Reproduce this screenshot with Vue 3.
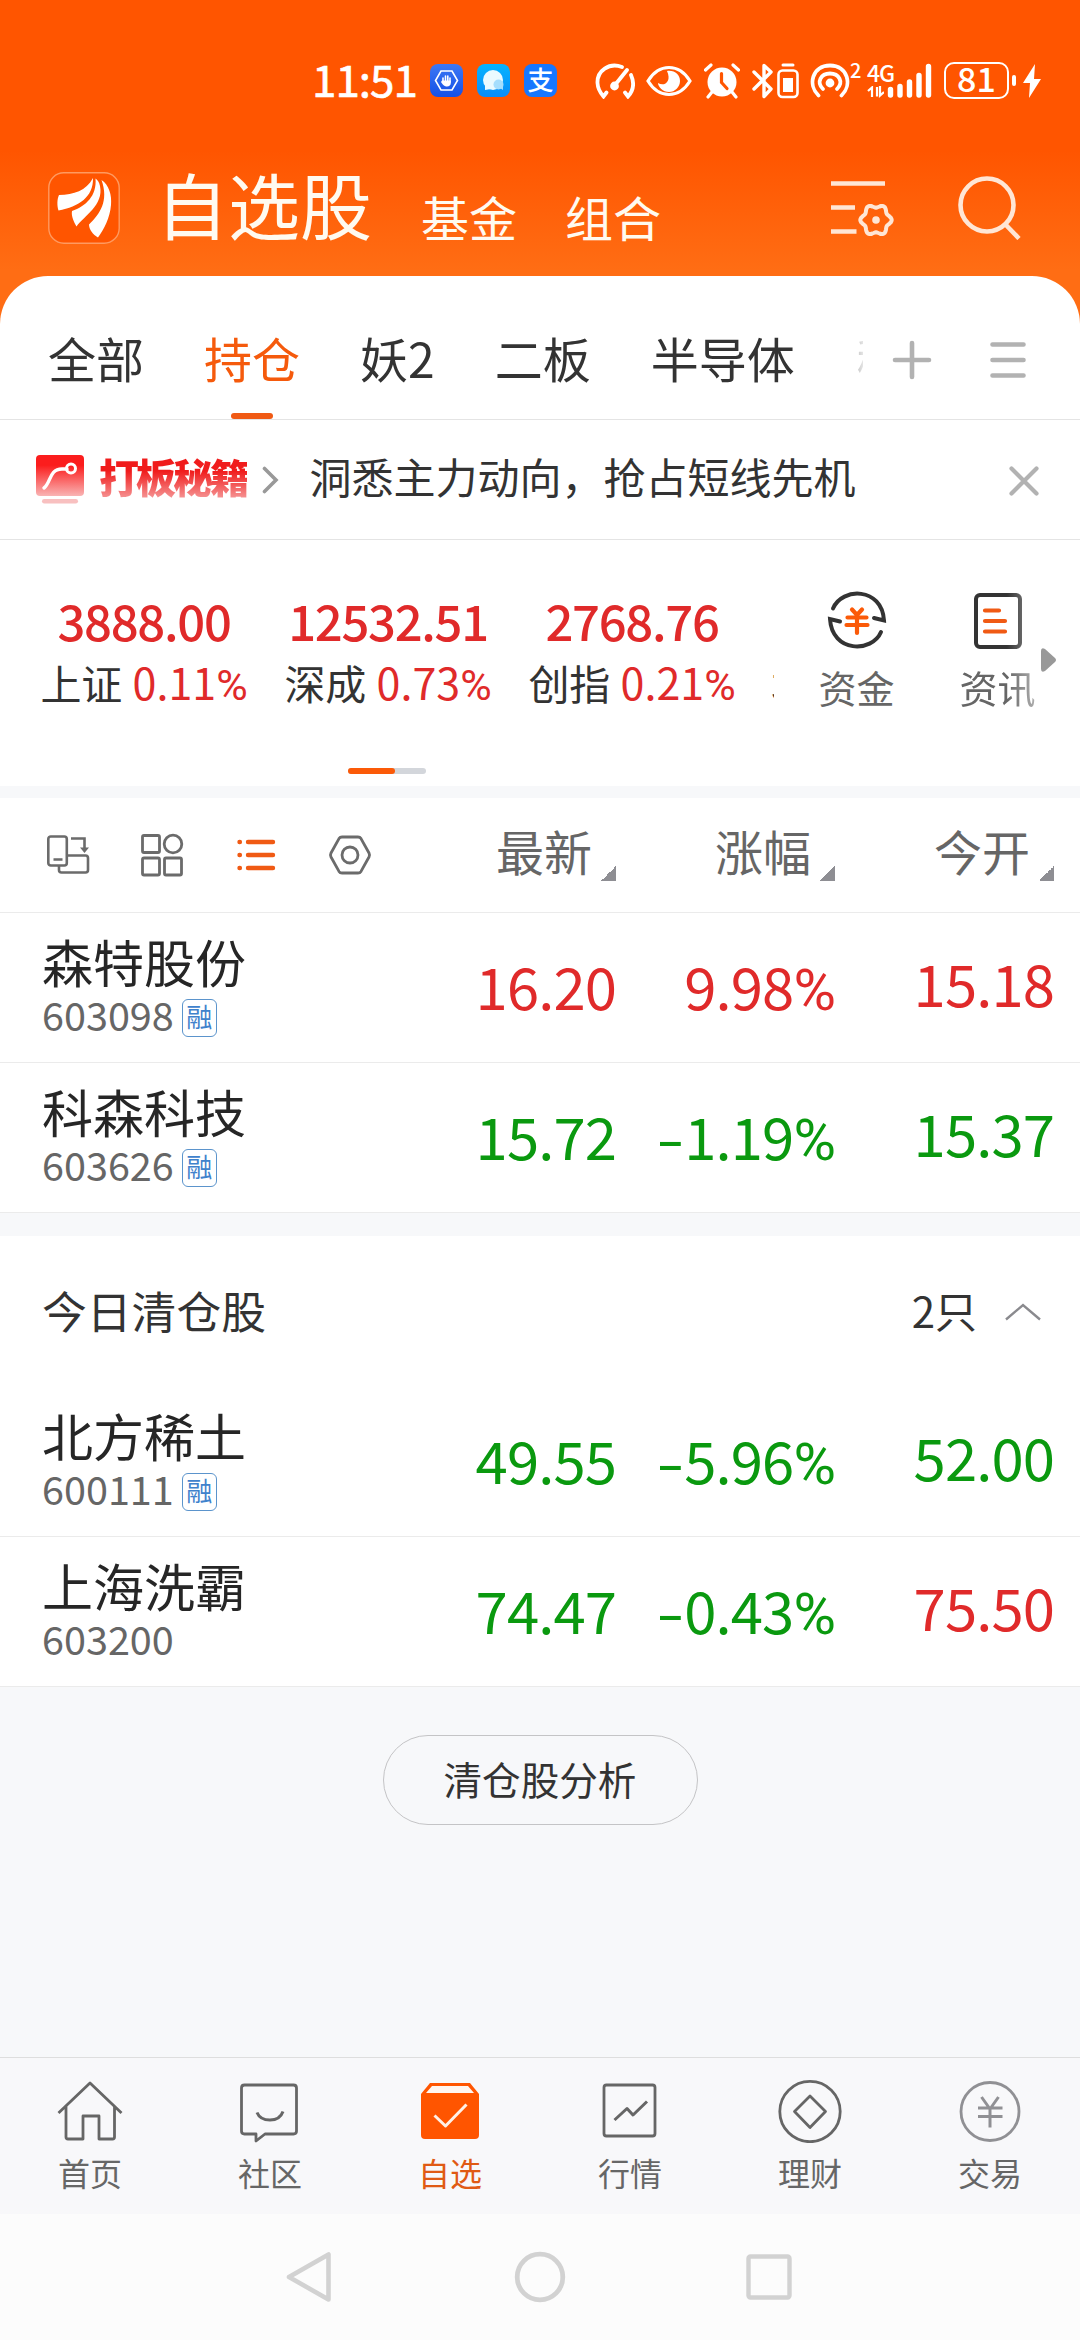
<template>
  <div class="page">
    <div class="status-bar">
      <span class="time">11:51</span>
      <div class="notices">
        <span class="notice hand">
          <svg width="33" height="33" viewBox="0 0 33 33" fill="none">
            <path d="M11 7h11l5.500 9.500L22 26H11l-5.500-9.500z" stroke="#fff" stroke-width="1.600" />
            <path d="M13 18v-4M15.500 17v-5M17.800 17v-5M20 18v-4" stroke="#fff" stroke-width="1.600" stroke-linecap="round" />
            <path d="M12 16.500h8.800v2.500c0 2-1.500 3.500-3.800 3.500-2.500 0-3.500-1-6-4.500z" fill="#fff" />
          </svg>
        </span>
        <span class="notice chat">
          <svg width="33" height="33" viewBox="0 0 33 33">
            <circle cx="16" cy="16" r="10" fill="#eafaff" />
            <path d="M8 20v6l6-1z" fill="#eafaff" />
            <circle cx="21.500" cy="20.500" r="5" fill="#a5defd" />
            <path d="M23 24l3 2v-5z" fill="#a5defd" />
          </svg>
        </span>
        <span class="notice pay">支</span>
      </div>
      <div class="sys-icons">
        <svg class="i-gauge" width="40" height="36" viewBox="0 0 40 36" fill="none" stroke="#fff" stroke-width="3.800" stroke-linecap="round">
          <path d="M27 4C14-1 2 8 2.500 20c.2 5 2.500 9.500 6 13.500l3-4M36 12c3.500 8 2.500 15.500-3 21.500l-3-4M32 7L20 22" />
          <circle cx="19.500" cy="23" r="2.500" fill="#fff" />
        </svg>
        <svg class="i-eye" width="46" height="32" viewBox="0 0 46 32" fill="none">
          <path d="M2 16C13-2 33-2 44 16 33 34 13 34 2 16z" stroke="#fff" stroke-width="3.200" />
          <path d="M21 6c8-1 13 4 13 10s-5 11-11 11-11-5-11-9c6 4 14-1 9-12z" fill="#fff" />
        </svg>
        <svg class="i-alarm" width="36" height="36" viewBox="0 0 36 36" fill="none" stroke-linecap="round">
          <circle cx="18" cy="19" r="14.500" fill="#fff" />
          <path d="M1.500 7L7 2M34.500 7L29 2M8 29l-4 5M28 29l4 5" stroke="#fff" stroke-width="3.200" />
          <path d="M17.500 10.500v9l5.500 6" stroke="#ff5500" stroke-width="3.200" />
        </svg>
        <svg class="i-bt" width="21" height="36" viewBox="0 0 21 36" fill="none" stroke="#fff" stroke-width="3.400" stroke-linejoin="round" stroke-linecap="round">
          <path d="M2 9l17 17-7 7.500V2.500l7 6.500L2 26" />
        </svg>
        <svg class="i-cell" width="22" height="36" viewBox="0 0 22 36" fill="none" stroke="#fff">
          <rect x="1.500" y="7.500" width="19" height="26.500" rx="4" stroke-width="2.600" />
          <path d="M6 2h10" stroke-width="3" stroke-linecap="round" />
          <rect x="6" y="15" width="10" height="14" fill="#fff" stroke="none" />
        </svg>
        <svg class="i-hotspot" width="40" height="36" viewBox="0 0 40 36" fill="none" stroke="#fff" stroke-width="3.800" stroke-linecap="round">
          <path d="M8.500 32.500C-2.500 22 2 2.500 20 2.500s22.500 19.500 11.500 30" />
          <path d="M13 26c-7-7-2-15.500 7-15.500S34 19 27 26" />
          <circle cx="20" cy="20" r="2.500" fill="#fff" />
        </svg>
        <span class="hotspot-count">2</span>
        <div class="net">
          <span class="net-type">4G</span>
          <svg width="17" height="12" viewBox="0 0 17 12" fill="none" stroke="#fff" stroke-width="2.200">
            <path d="M1 5l4-3.500V11M10 1v9.500M13 0v9.500l4-3.500" />
          </svg>
        </div>
        <svg class="i-signal" width="45" height="36" viewBox="0 0 45 36" stroke="#fff" stroke-width="5.400" stroke-linecap="round">
          <path d="M3.500 26.500V32M13 23.500V32M22.500 19V32M32 12.500V32M41.500 3.500V32" />
        </svg>
        <span class="battery">81</span>
        <span class="battery-nub"></span>
        <svg class="i-bolt" width="18" height="36" viewBox="0 0 18 36" fill="#fff">
          <path d="M12 1L0 20h7L6 35l12-19h-7z" />
        </svg>
      </div>
    </div>

    <div class="app-bar">
      <svg class="logo" width="72" height="72" viewBox="0 0 72 72">
        <rect x=".8" y=".8" width="70.400" height="70.400" rx="15" fill="#ff5500" stroke="#ff9a60" stroke-width="1.400" />
        <g fill="#fff">
          <path d="M45 6C38 19 26 22.500 11 23c-2 4-2 11-.5 15.500C31 34.500 45.500 25 45 6z" />
          <path d="M47.500 6.500C49 24 38 34 24 39c-1 5 2 11 4.500 15.500C36 44 56 33 52 14c-.8-4-2.500-6-4.500-7.500z" />
          <path d="M53.500 8C61 13 64 23 63 33c-1 13-7 24-13 32.500-5-3-9-8-9-13C52 42 61 29 53.500 8z" />
        </g>
      </svg>
      <span class="title">自选股</span>
      <span class="sub-title">基金</span>
      <span class="sub-title">组合</span>
      <div class="app-actions">
        <svg width="64" height="64" viewBox="0 0 64 64" fill="none" stroke="#ffe6d5" stroke-width="4.600">
          <path d="M1 7.500h54M1 31.500h24M1 55.500h25.500" />
          <path :d="gearPath" stroke-width="4" stroke-linejoin="round" />
          <circle cx="46" cy="44" r="3.800" fill="#ffe6d5" stroke="none" />
        </svg>
        <svg width="64" height="64" viewBox="0 0 64 64" fill="none" stroke="#ffe6d5" stroke-width="4.600">
          <circle cx="29" cy="29" r="26.500" />
          <path d="M47 48l14 14.500" />
        </svg>
      </div>
    </div>

    <div class="sheet">
      <div class="group-tabs">
        <div class="tab-scroll">
          <span v-for="tab in groupTabs" :key="tab" class="group-tab" :class="{ active: tab === '持仓' }">{{ tab }}</span>
        </div>
        <svg class="i-plus" width="40" height="40" viewBox="0 0 40 40" stroke="#b2b2b2" stroke-width="4.600" stroke-linecap="round">
          <path d="M3 20h34M20 3v34" />
        </svg>
        <svg class="i-menu" width="36" height="40" viewBox="0 0 36 40" stroke="#b2b2b2" stroke-width="4.600" stroke-linecap="round">
          <path d="M2.500 4.500h31M2.500 20h31M2.500 35.500h31" />
        </svg>
      </div>

      <div class="banner">
        <svg class="banner-icon" width="48" height="50" viewBox="0 0 48 50" fill="none">
          <defs>
            <linearGradient id="bannerFill" x1="0" y1="0" x2="0" y2="1">
              <stop offset="0.250" stop-color="#fb1d1d" />
              <stop offset="1" stop-color="#f9b4b4" />
            </linearGradient>
          </defs>
          <rect width="48" height="41" rx="4" fill="url(#bannerFill)" />
          <rect x="6" y="44" width="36" height="4.500" rx="2.200" fill="#f8c0c0" />
          <path d="M8 33c7-5 5-19 18-19h5" stroke="#fff" stroke-width="3.400" stroke-linecap="round" />
          <circle cx="35" cy="13.500" r="4.500" stroke="#fff" stroke-width="3" />
        </svg>
        <span class="banner-tag">打板秘籍</span>
        <svg class="banner-arrow" width="17" height="28" viewBox="0 0 17 28" fill="none" stroke="#999" stroke-width="3.600" stroke-linecap="round">
          <path d="M2.500 2.500L14 14 2.500 25.500" />
        </svg>
        <span class="banner-text">洞悉主力动向，抢占短线先机</span>
        <svg class="banner-close" width="30" height="30" viewBox="0 0 30 30" stroke="#b2b2b2" stroke-width="4.200" stroke-linecap="round">
          <path d="M2.500 2.500l25 25M27.500 2.500l-25 25" />
        </svg>
      </div>

      <div class="indexes">
        <div class="index-main">
          <div class="index-list">
            <div v-for="item in indexes" :key="item.name" class="index-item">
              <div class="index-value">{{ item.value }}</div>
              <div class="index-label">
                {{ item.name }}
                <span v-if="item.rate" class="index-rate">{{ item.rate }}<i class="pct">%</i></span>
              </div>
            </div>
          </div>
          <div class="shortcuts">
            <div class="shortcut">
              <svg width="60" height="60" viewBox="0 0 60 60" fill="none" stroke="#333" stroke-width="4" stroke-linecap="round">
                <path d="M6 18.500C15-3 55-3 57 30.500l-10-2.500M54 42C45 63 5 63 3 29l10 2.500" />
                <path d="M25 19.500l5 5.500 5-5.500M20.500 27.500h19M19.500 35h21M30 27v16" stroke="#fb5a08" stroke-width="4.200" />
              </svg>
              <span>资金</span>
            </div>
            <div class="shortcut fade">
              <svg width="60" height="60" viewBox="0 0 60 60" fill="none" stroke="#333" stroke-width="4">
                <rect x="8" y="5" width="44" height="52" rx="4" />
                <path d="M17 20.500h14M17 31h20M17 41.500h20" stroke="#f05a14" stroke-width="4.200" stroke-linecap="round" />
              </svg>
              <span>资讯</span>
            </div>
          </div>
          <svg class="more" width="15" height="24" viewBox="0 0 15 24" fill="#999">
            <path d="M0 3q0-4 4-2l10 9q2 2 0 4L4 23q-4 2-4-2z" />
          </svg>
        </div>
        <div class="pager"><span></span></div>
      </div>

      <div class="gap-small"></div>

      <div class="grid-row list-head">
        <div class="view-modes">
          <svg width="44" height="44" viewBox="0 0 44 44" fill="none" stroke="#6b6b6b" stroke-width="2.600">
            <rect x="2.300" y="3.500" width="18.500" height="29" rx="2.500" />
            <path d="M7.500 26.500h9M13 33v4q0 2.500 2.500 2.500h24q2.500 0 2.500-2.500V25q0-2.500-2.500-2.500H21M25 5.500h13.500V16" />
            <path d="M34 14.500h9L38.500 20z" fill="#6b6b6b" stroke="none" />
          </svg>
          <svg width="44" height="44" viewBox="0 0 44 44" fill="none" stroke="#6b6b6b" stroke-width="2.800">
            <rect x="2.500" y="2.500" width="17" height="17" rx="1.500" />
            <circle cx="33" cy="11" r="8.800" />
            <rect x="2.500" y="25" width="17" height="17" rx="1.500" />
            <rect x="24.500" y="25" width="17" height="17" rx="1.500" />
          </svg>
          <svg width="44" height="44" viewBox="0 0 44 44" fill="none" stroke="#f05a14" stroke-width="4.400" stroke-linecap="round">
            <path d="M14 9h25M14 22h25M14 35h25M5.500 9h.4M5.500 22h.4M5.500 35h.4" />
          </svg>
          <svg width="44" height="44" viewBox="0 0 44 44" fill="none" stroke="#6b6b6b" stroke-width="2.800" stroke-linejoin="round">
            <path d="M14 4h16q2 0 3 1.600L41 20q1 2 0 4L33 38.400Q32 40 30 40H14q-2 0-3-1.600L3 24q-1-2 0-4L11 5.600Q12 4 14 4z" />
            <circle cx="22" cy="22" r="8" />
          </svg>
        </div>
        <div v-for="col in columns" :key="col" class="col-head">
          <span>{{ col }}</span>
          <i class="sort"></i>
        </div>
      </div>

      <div v-for="stock in holdings" :key="stock.code" class="grid-row stock">
        <div class="stock-info">
          <div class="stock-name">{{ stock.name }}</div>
          <div class="stock-code">{{ stock.code }}<span v-if="stock.margin" class="badge">融</span></div>
        </div>
        <div class="num" :class="stock.trend">{{ stock.price }}</div>
        <div class="num" :class="stock.trend"><i v-if="stock.trend === 'down'" class="minus">-</i>{{ stock.rate }}<i class="pct">%</i></div>
        <div class="num open" :class="stock.openTrend">{{ stock.open }}</div>
      </div>

      <div class="gap-large"></div>

      <div class="cleared-head">
        <span class="cleared-title">今日清仓股</span>
        <span class="cleared-count">2只</span>
        <svg width="36" height="18" viewBox="0 0 36 18" fill="none" stroke="#8a8a8e" stroke-width="2.400">
          <path d="M1 16.500L18 2l17 14.500" />
        </svg>
      </div>

      <div v-for="stock in cleared" :key="stock.code" class="grid-row stock">
        <div class="stock-info">
          <div class="stock-name">{{ stock.name }}</div>
          <div class="stock-code">{{ stock.code }}<span v-if="stock.margin" class="badge">融</span></div>
        </div>
        <div class="num" :class="stock.trend">{{ stock.price }}</div>
        <div class="num" :class="stock.trend"><i v-if="stock.trend === 'down'" class="minus">-</i>{{ stock.rate }}<i class="pct">%</i></div>
        <div class="num open" :class="stock.openTrend">{{ stock.open }}</div>
      </div>

      <div class="empty-area">
        <button class="analyse">清仓股分析</button>
      </div>
    </div>

    <div class="tab-bar">
      <div v-for="item in navItems" :key="item.key" class="nav-item" :class="{ active: item.key === 'watch' }">
        <svg width="66" height="64" viewBox="0 0 66 64" fill="none" stroke="#666" stroke-width="2.800" stroke-linejoin="round">
          <template v-if="item.key === 'home'">
            <path d="M1.500 34L33 4l31.500 30M9 27v31q0 2 2 2h15V37h16v23h13.500q2 0 2-2V27" />
          </template>
          <template v-else-if="item.key === 'community'">
            <path d="M7.500 6h49q3 0 3 3v43q0 3-3 3H28l-9 7v-7H7.500q-3 0-3-3V9q0-3 3-3z" />
            <path d="M20 33.500q3 7.500 13 7.500t13-8.500" stroke-width="3" />
          </template>
          <template v-else-if="item.key === 'watch'">
            <path d="M4 15L13 4h40l9 11v41q0 4-4 4H8q-4 0-4-4z" fill="#ff5500" stroke="none" />
            <path d="M9 14l6-7h36l6 7z" fill="#fff6f0" stroke="none" />
            <path d="M17.500 36.500l11 10.500 21-21.500" stroke="#fff0e6" stroke-width="3" />
          </template>
          <template v-else-if="item.key === 'market'">
            <rect x="7" y="6" width="51" height="51" rx="2.500" />
            <path d="M17.500 41L30 29.500l6 6.500 14-13.500" stroke-width="3" />
          </template>
          <template v-else-if="item.key === 'wealth'">
            <circle cx="33" cy="32.500" r="30.200" />
            <path d="M33 17l15.500 15.500L33 48.500l-15.500-16z" />
          </template>
          <template v-else>
            <g stroke="#909094">
              <circle cx="33" cy="32.500" r="29" />
              <path d="M24.500 18L33 30l8.500-12M21 29h24.500M21 37.500h24.500M33 29v19.500" stroke-width="3" />
            </g>
          </template>
        </svg>
        <span>{{ item.label }}</span>
      </div>
    </div>

    <div class="sys-nav">
      <svg width="52" height="52" viewBox="0 0 52 52" fill="none" stroke="#d2d2d2" stroke-width="4.600" stroke-linejoin="round">
        <path d="M43.500 3.500v45L4 26z" />
      </svg>
      <svg width="52" height="52" viewBox="0 0 52 52" fill="none" stroke="#d2d2d2" stroke-width="4.800">
        <circle cx="26" cy="26" r="22.800" />
      </svg>
      <svg width="52" height="52" viewBox="0 0 52 52" fill="none" stroke="#d2d2d2" stroke-width="4.400">
        <rect x="5.500" y="5.500" width="41" height="41" rx="2" />
      </svg>
    </div>
  </div>
</template>

<script setup>
const groupTabs = ['全部', '持仓', '妖2', '二板', '半导体', '稀土']

const indexes = [
  { name: '上证', value: '3888.00', rate: '0.11' },
  { name: '深成', value: '12532.51', rate: '0.73' },
  { name: '创指', value: '2768.76', rate: '0.21' },
  { name: '北证', value: '', rate: '' }
]

const columns = ['最新', '涨幅', '今开']

const holdings = [
  { name: '森特股份', code: '603098', margin: true, price: '16.20', rate: '9.98', open: '15.18', trend: 'up', openTrend: 'up' },
  { name: '科森科技', code: '603626', margin: true, price: '15.72', rate: '1.19', open: '15.37', trend: 'down', openTrend: 'down' }
]

const cleared = [
  { name: '北方稀土', code: '600111', margin: true, price: '49.55', rate: '5.96', open: '52.00', trend: 'down', openTrend: 'down' },
  { name: '上海洗霸', code: '603200', margin: false, price: '74.47', rate: '0.43', open: '75.50', trend: 'down', openTrend: 'up' }
]

const navItems = [
  { key: 'home', label: '首页' },
  { key: 'community', label: '社区' },
  { key: 'watch', label: '自选' },
  { key: 'market', label: '行情' },
  { key: 'wealth', label: '理财' },
  { key: 'trade', label: '交易' }
]

// six-lobed gear outline around (46, 44)
const gearPoints = []
for (let i = 0; i < 72; i++) {
  const a = (i * 5 * Math.PI) / 180
  const r = 14 + 1.7 * Math.cos(6 * a)
  gearPoints.push(`${(46 + r * Math.cos(a)).toFixed(1)} ${(44 + r * Math.sin(a)).toFixed(1)}`)
}
const gearPath = `M${gearPoints.join('L')}z`
</script>

<style>
body {
  margin: 0;
  background: #f7f8fa;
}
</style>

<style scoped>
.page {
  width: 1080px;
  height: 2340px;
  display: flex;
  flex-direction: column;
  overflow: hidden;
  background: linear-gradient(#ff5500 150px, #ff6d14 270px, #ff6d14 330px, #fff 330px);
  font-family: "Noto Sans CJK SC", sans-serif;
  color: #333;
}

svg {
  display: block;
  flex: none;
}

.status-bar {
  height: 161px;
  flex: none;
  display: flex;
  align-items: center;
  padding-left: 312px;
  color: #fff;
}

.time {
  width: 118px;
  font-size: 44px;
  line-height: 50px;
  letter-spacing: -1px;
  margin-bottom: 6px;
  -webkit-text-stroke: 0.6px #fff;
}

.notices {
  display: flex;
  gap: 14px;
  width: 165px;
}

.notice {
  width: 33px;
  height: 33px;
  border-radius: 8px;
}

.hand {
  background: linear-gradient(#3d78f5, #1450e6);
}

.chat {
  background: linear-gradient(#04b4ff, #0a8cf8);
}

.pay {
  background: #1677ff;
  font-size: 26px;
  line-height: 30px;
  font-weight: 500;
  text-align: center;
}

.sys-icons {
  display: flex;
  align-items: center;
}

.i-eye {
  margin-left: 11px;
}

.i-alarm {
  margin-left: 12px;
}

.i-bt {
  margin-left: 12px;
}

.i-cell {
  margin-left: 4px;
}

.i-hotspot {
  margin-left: 11px;
}

.hotspot-count {
  width: 17px;
  font-size: 20px;
  line-height: 20px;
  margin-bottom: 22px;
  font-weight: 500;
}

.net {
  width: 20px;
  height: 36px;
  white-space: nowrap;
}

.net-type {
  display: block;
  height: 23px;
  font-size: 23px;
  line-height: 18px;
  font-weight: 500;
  letter-spacing: -1px;
}

.i-signal {
  margin-right: 12px;
}

.battery {
  width: 61px;
  height: 33px;
  border: 2.5px solid #fff;
  border-radius: 10px;
  text-align: center;
  font-size: 34px;
  line-height: 28px;
  font-weight: 500;
}

.battery-nub {
  width: 4px;
  height: 11px;
  margin: 0 7px 0 3px;
  border-radius: 2px;
  background: #fff;
}

.app-bar {
  height: 94px;
  flex: none;
  margin-bottom: 21px;
  padding: 0 58px 0 48px;
  display: flex;
  align-items: center;
  color: #fffaf0;
}

.title {
  margin: 0 49px 10px 36px;
  font-size: 72px;
  line-height: 80px;
}

.sub-title {
  margin: 15px 48px 0 0;
  font-size: 48px;
  line-height: 60px;
}

.app-actions {
  display: flex;
  gap: 64px;
  margin-left: auto;
}

.sheet {
  flex: 1;
  display: flex;
  flex-direction: column;
  background: #fff;
  border-radius: 48px 48px 0 0;
}

.group-tabs {
  box-sizing: border-box;
  height: 144px;
  flex: none;
  display: flex;
  align-items: center;
  padding: 18px 54px 0 48px;
  border-bottom: 1px solid #e4e4e4;
}

.tab-scroll {
  width: 815px;
  height: 125px;
  display: flex;
  align-items: center;
  gap: 60px;
  overflow: hidden;
  white-space: nowrap;
  mask-image: linear-gradient(90deg, #000 780px, transparent 820px);
}

.group-tab {
  flex: none;
  font-size: 48px;
  line-height: 60px;
}

.group-tab:last-child {
  padding-left: 2px;
}

.group-tab.active {
  position: relative;
  color: #f55a0c;
}

.group-tab.active::after {
  content: "";
  position: absolute;
  left: 27px;
  bottom: -32px;
  width: 42px;
  height: 6px;
  border-radius: 3px;
  background: #f05a14;
}

.i-plus {
  margin: 6px 0 0 29px;
}

.i-menu {
  margin: 6px 0 0 auto;
}

.banner {
  box-sizing: border-box;
  height: 120px;
  flex: none;
  display: flex;
  align-items: center;
  padding: 0 41px 8px 36px;
  border-bottom: 1px solid #e4e4e4;
}

.banner-icon {
  margin-top: 9px;
}

.banner-tag {
  margin: 0 15px 0 15px;
  font-size: 40px;
  line-height: 50px;
  font-weight: 900;
  letter-spacing: -2.9px;
  color: transparent;
  background: linear-gradient(#f01c1c 40%, #f6a0a0 100%);
  background-clip: text;
  -webkit-background-clip: text;
}

.banner-arrow {
  margin-top: 9px;
}

.banner-text {
  margin-left: 30px;
  font-size: 42px;
  line-height: 50px;
}

.banner-close {
  margin: 10px 0 0 auto;
}

.indexes {
  box-sizing: border-box;
  height: 246px;
  flex: none;
  padding-top: 50px;
}

.index-main {
  height: 178px;
  display: flex;
}

.index-list {
  width: 752px;
  margin-left: 22px;
  display: flex;
  overflow: hidden;
}

.index-item {
  width: 244px;
  flex: none;
  text-align: center;
}

.index-item:last-child {
  padding-left: 17px;
  text-align: left;
}

.index-value {
  height: 60px;
  font-size: 49px;
  line-height: 60px;
  font-weight: 500;
  letter-spacing: -1.3px;
  color: #e02a2a;
}

.index-label {
  margin-top: 6px;
  font-size: 41px;
  line-height: 50px;
  white-space: nowrap;
}

.index-rate {
  margin-left: 1px;
  font-size: 43px;
  color: #e02a2a;
}

.pct {
  font-family: Roboto, sans-serif;
  font-style: normal;
}

.minus {
  display: inline-block;
  margin-right: 5px;
  font-style: normal;
  transform: scaleX(1.4);
}

.up {
  color: #e02a2a;
}

.down {
  color: #0a990f;
}

.shortcuts {
  display: flex;
  margin-left: 12px;
}

.shortcut {
  width: 141px;
  display: flex;
  flex-direction: column;
  align-items: center;
  color: #666;
}

.shortcut span {
  margin-top: 14px;
  font-size: 38px;
  line-height: 46px;
}

.shortcut.fade {
  mask-image: linear-gradient(90deg, #000 80px, rgba(0, 0, 0, 0.5) 110px);
}

.more {
  margin: 58px 0 0 -27px;
}

.pager {
  width: 78px;
  height: 6px;
  margin-left: 348px;
  border-radius: 3px;
  background: #d3d6db;
}

.pager span {
  display: block;
  width: 47px;
  height: 6px;
  border-radius: 3px;
  background: #fb5a08;
}

.gap-small {
  height: 12px;
  flex: none;
  background: #f7f8fa;
}

.gap-large {
  height: 23px;
  flex: none;
  background: #f7f8fa;
}

.grid-row {
  box-sizing: border-box;
  flex: none;
  display: grid;
  grid-template-columns: 397px 219px 219px 219px;
  border-bottom: 1px solid #ebebeb;
}

.list-head {
  height: 115px;
}

.view-modes {
  display: flex;
  align-items: center;
  gap: 50px;
  padding-left: 46px;
}

.col-head {
  display: flex;
  align-items: center;
  justify-content: flex-end;
  gap: 9px;
  padding-bottom: 11px;
  font-size: 48px;
  line-height: 60px;
  color: #666;
}

.sort {
  width: 15px;
  height: 15px;
  margin-top: 47px;
  background: linear-gradient(135deg, transparent 50%, #8e8e93 50%);
}

.stock {
  height: 150px;
}

.stock-info {
  padding: 18px 0 0 42px;
}

.stock-name {
  height: 61px;
  font-size: 51px;
  line-height: 60px;
  color: #262626;
}

.stock-code {
  height: 44px;
  display: flex;
  align-items: center;
  font-size: 39.6px;
  line-height: 44px;
  color: #666;
}

.badge {
  box-sizing: border-box;
  width: 35px;
  height: 38px;
  margin: 7px 0 0 8px;
  border: 1.5px solid #5b94cc;
  border-radius: 6px;
  text-align: center;
  font-size: 26px;
  line-height: 31px;
  color: #3f82cc;
}

.num {
  padding-top: 42px;
  font-size: 58px;
  line-height: 60px;
  letter-spacing: -0.9px;
  text-align: right;
  white-space: nowrap;
}

.num.open {
  padding-top: 39px;
}

.cleared-head {
  box-sizing: border-box;
  height: 151px;
  flex: none;
  display: flex;
  align-items: center;
  padding: 0 39px 4px 42px;
}

.cleared-title {
  flex: 1;
  font-size: 44.8px;
  line-height: 60px;
}

.cleared-count {
  margin-right: 28px;
  font-size: 42px;
  line-height: 60px;
}

.cleared-head svg {
  margin-top: 4px;
}

.empty-area {
  flex: 1;
  background: #f7f8fa;
}

.analyse {
  display: block;
  box-sizing: border-box;
  width: 315px;
  height: 90px;
  margin: 48px auto 0;
  padding: 0 0 5px;
  border: 1px solid #c4c4c6;
  border-radius: 45px;
  background: none;
  font-family: inherit;
  font-size: 38.6px;
  color: #333;
}

.tab-bar {
  box-sizing: border-box;
  height: 157px;
  flex: none;
  display: flex;
  padding-top: 21px;
  border-top: 1px solid #dedede;
  background: #f8f8fa;
}

.nav-item {
  flex: 1;
  display: flex;
  flex-direction: column;
  align-items: center;
  font-size: 32px;
  line-height: 40px;
  color: #666;
}

.nav-item span {
  margin-top: 9px;
}

.nav-item.active {
  color: #e05a14;
}

.sys-nav {
  height: 126px;
  flex: none;
  display: flex;
  align-items: center;
  justify-content: center;
  gap: 177px;
  background: #fcfcfc;
}
</style>
